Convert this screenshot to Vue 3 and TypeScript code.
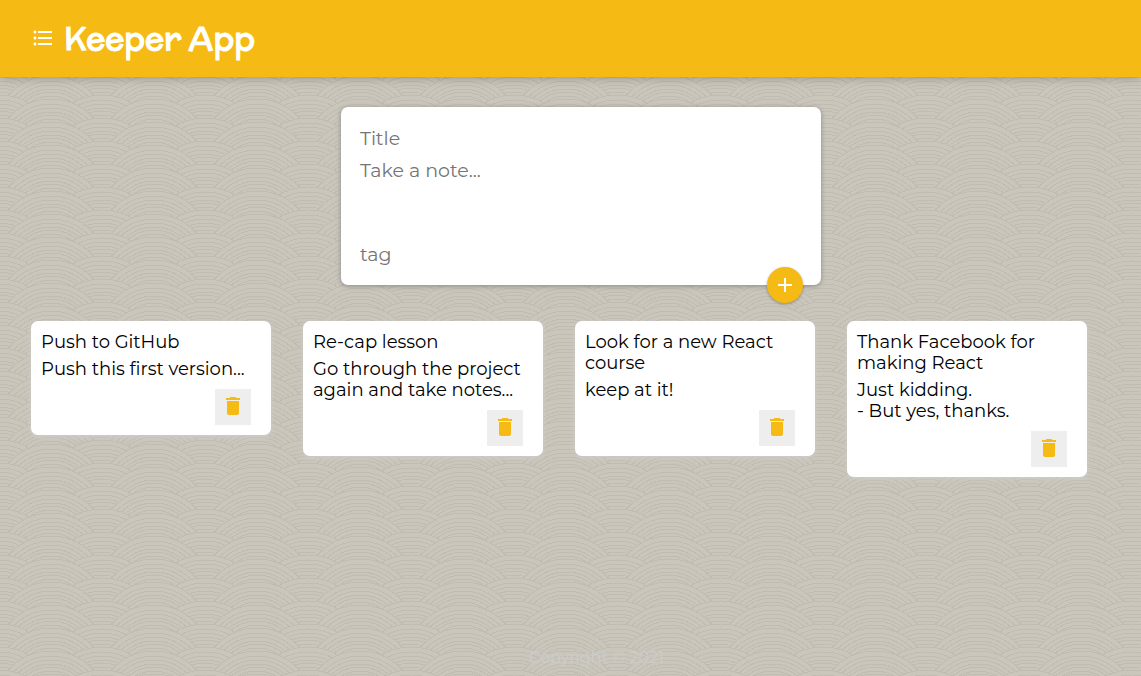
<script setup lang="ts">
import { ref } from 'vue'

interface Note {
  id: number
  title: string
  content: string
}

const notes = ref<Note[]>([
  { id: 1, title: 'Push to GitHub', content: 'Push this first version...' },
  { id: 2, title: 'Re-cap lesson', content: 'Go through the project\nagain and take notes...' },
  { id: 3, title: 'Look for a new React course', content: 'keep at it!' },
  { id: 4, title: 'Thank Facebook for making React', content: 'Just kidding.\n- But yes, thanks.' },
])

const title = ref('')
const content = ref('')
const tag = ref('')

function addNote(): void {
  if (!title.value && !content.value) return
  notes.value.push({ id: Date.now(), title: title.value, content: content.value })
  title.value = ''
  content.value = ''
  tag.value = ''
}

function removeNote(id: number): void {
  notes.value = notes.value.filter((note) => note.id !== id)
}

// Overlapping wave scales, painted from the top row down so each row covers the last.
interface Scale {
  x: number
  y: number
}
const radius = 57
const rings = [57, 52, 48, 44, 41, 37, 34]
const scales: Scale[] = []
for (let row = -4; row <= 1; row++) {
  for (const x of [-1, 102]) scales.push({ x, y: row * 23 + 3 + radius })
  for (const x of [-52, 51, 154]) scales.push({ x, y: row * 23 + 7 + radius })
}
</script>

<template>
  <div class="page">
    <svg class="backdrop" aria-hidden="true">
      <defs>
        <pattern id="waves" width="103" height="23" patternUnits="userSpaceOnUse">
          <g v-for="(s, i) in scales" :key="i">
            <circle :cx="s.x" :cy="s.y" :r="radius" class="scale" />
            <circle v-for="r in rings" :key="r" :cx="s.x" :cy="s.y" :r="r" class="ring" />
          </g>
        </pattern>
      </defs>
      <rect width="100%" height="100%" fill="url(#waves)" />
    </svg>

    <header class="header">
      <svg class="icon" viewBox="0 0 24 24" aria-hidden="true">
        <path d="M4 10.500c-.83 0-1.500.67-1.500 1.500s.67 1.500 1.500 1.500 1.500-.67 1.500-1.500-.67-1.500-1.500-1.500zm0-6c-.83 0-1.500.67-1.500 1.500S3.170 7.500 4 7.500 5.500 6.830 5.500 6 4.830 4.500 4 4.500zm0 12c-.83 0-1.500.68-1.500 1.500s.68 1.500 1.500 1.500 1.500-.68 1.500-1.500-.67-1.500-1.500-1.500zM7 19h14v-2H7v2zm0-6h14v-2H7v2zm0-8v2h14V5H7z" />
      </svg>
      <h1>Keeper App</h1>
    </header>

    <main class="main">
      <div class="create">
        <form class="form" @submit.prevent="addNote">
          <input v-model="title" name="title" placeholder="Title" aria-label="Title" />
          <textarea v-model="content" name="content" rows="3" placeholder="Take a note..." aria-label="Take a note"></textarea>
          <input v-model="tag" name="tag" placeholder="tag" aria-label="tag" />
          <button class="add" type="submit" aria-label="Add note">
            <svg class="icon" viewBox="0 0 24 24" aria-hidden="true">
              <path d="M19 13h-6v6h-2v-6H5v-2h6V5h2v6h6v2z" />
            </svg>
          </button>
        </form>
      </div>

      <section class="notes" aria-label="Notes">
        <article v-for="note in notes" :key="note.id" class="note">
          <h2>{{ note.title }}</h2>
          <p>{{ note.content }}</p>
          <button class="delete" type="button" :aria-label="'Delete ' + note.title" @click="removeNote(note.id)">
            <svg class="icon" viewBox="0 0 24 24" aria-hidden="true">
              <path d="M6 19c0 1.100.9 2 2 2h8c1.100 0 2-.9 2-2V7H6v12zM19 4h-3.500l-1-1h-5l-1 1H5v2h14V4z" />
            </svg>
          </button>
        </article>
      </section>
    </main>

    <footer class="footer">Copyright © 2021</footer>
  </div>
</template>

<style>
body {
  margin: 0;
}
</style>

<style scoped>
.page {
  position: relative;
  isolation: isolate;
  display: flex;
  flex-direction: column;
  min-height: 100vh;
  background: #cbc6ba;
  font-family: Montserrat, Inter, 'Open Sans', sans-serif;
}
.page *,
.page {
  box-sizing: border-box;
}
.backdrop {
  position: absolute;
  inset: 0;
  z-index: -1;
  width: 100%;
  height: 100%;
}
.scale {
  fill: #cbc6bb;
}
.ring {
  fill: none;
  stroke: #c1bcb1;
  stroke-width: 1;
  shape-rendering: crispEdges;
}
.icon {
  display: block;
  width: 24px;
  height: 24px;
  fill: currentColor;
}
.header {
  display: flex;
  align-items: center;
  gap: 9px;
  height: 77px;
  padding: 0 31px 1px;
  background: #f5ba13;
  color: #fff;
  box-shadow: 0 0 10px 0 rgba(0, 0, 0, 0.3);
}
h1 {
  margin: 0;
  font-family: McLaren, Inter, sans-serif;
  font-size: 32px;
  font-weight: 600;
  line-height: 40px;
  -webkit-text-stroke: 1px currentColor;
}
.main {
  flex: 1;
}
.create {
  padding: 30px 0 36px 21px;
}
.form {
  position: relative;
  display: flex;
  flex-direction: column;
  width: 480px;
  max-width: 100%;
  margin: 0 auto;
  padding: 15px;
  border-radius: 7px;
  background: #fff;
  box-shadow: 0 1px 5px rgba(138, 137, 137, 1);
}
.form input,
.form textarea {
  display: block;
  width: 100%;
  margin: 0;
  padding: 4px;
  border: none;
  outline: none;
  background: transparent;
  font-family: inherit;
  font-size: 19px;
  line-height: 24px;
  resize: none;
}
.form input {
  height: 32px;
}
.form textarea {
  height: 84px;
  padding-top: 5px;
}
.form ::placeholder {
  color: #757575;
  opacity: 1;
}
.add {
  position: absolute;
  right: 18px;
  bottom: -18px;
  display: grid;
  place-items: center;
  width: 36px;
  height: 36px;
  padding: 0;
  border: none;
  border-radius: 50%;
  background: #f5ba13;
  color: #fff;
  box-shadow: 0 1px 3px rgba(0, 0, 0, 0.3);
  cursor: pointer;
}
.notes {
  display: flex;
  flex-wrap: wrap;
  align-items: flex-start;
  gap: 32px;
  padding: 0 16px 32px 31px;
}
.note {
  display: flex;
  flex-direction: column;
  width: 240px;
  padding: 11px 10px 10px;
  border-radius: 7px;
  background: #fff;
  box-shadow: 0 2px 5px #ccc;
}
.note h2,
.note p {
  margin: 0;
  font-size: 18px;
  font-weight: 400;
  line-height: 21px;
  color: #000;
}
.note h2 {
  margin-bottom: 6px;
}
.note p {
  margin-bottom: 9px;
  white-space: pre-wrap;
}
.delete {
  display: grid;
  place-items: center;
  align-self: flex-end;
  width: 36px;
  height: 36px;
  margin-right: 10px;
  padding: 0 0 2px;
  border: none;
  background: #eee;
  color: #f5ba13;
  cursor: pointer;
}
.footer {
  padding: 0 0 8px 52px;
  text-align: center;
  font-size: 16px;
  line-height: 20px;
  color: #ccc;
}
</style>
